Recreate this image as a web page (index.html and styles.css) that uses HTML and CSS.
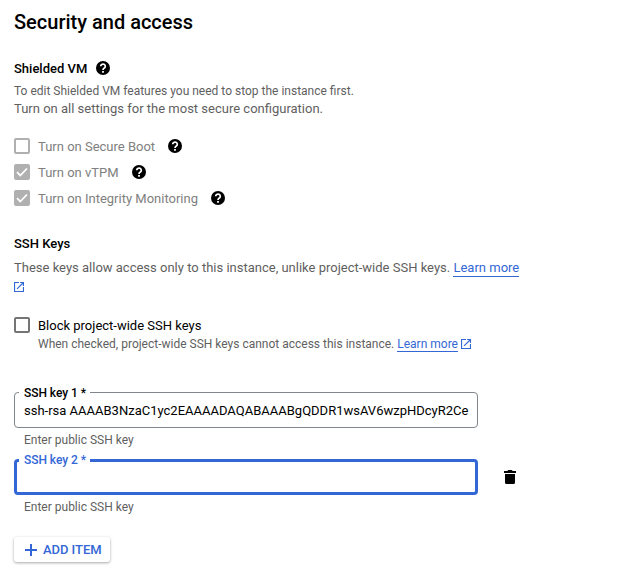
FILE: index.html
```html
<!DOCTYPE html>
<html lang="en">
<head>
<meta charset="utf-8">
<title>Security and access</title>
<link rel="stylesheet" href="styles.css">
</head>
<body>
<svg class="defs" aria-hidden="true">
  <symbol id="help" viewBox="0 0 14 14"><circle cx="7" cy="7" r="7"/><path d="M4.700 5.300a2.300 2.200 0 1 1 3.700 1.700C7.500 7.600 7 7.900 7 8.900" fill="none" stroke="#fff" stroke-width="1.700"/><path d="M6.100 10h1.800v1.700H6.100z" fill="#fff"/></symbol>
  <symbol id="launch" viewBox="3 3 18 18"><path d="M19 19H5V5h7V3H3v18h18v-9h-2v7zM14 3v2h3.590l-9.830 9.830 1.410 1.410L19 6.410V10h2V3h-7z"/></symbol>
</svg>
<main class="panel">
  <h2 class="title">Security and access</h2>

  <section class="shielded">
    <h3 class="subtitle"><span>Shielded VM</span><svg class="help"><use href="#help"/></svg></h3>
    <p class="note">To edit Shielded VM features you need to stop the instance first.</p>
    <p class="text">Turn on all settings for the most secure configuration.</p>
    <div class="options">
      <div class="option"><span class="box"></span><span class="option-label">Turn on Secure Boot</span><svg class="help"><use href="#help"/></svg></div>
      <div class="option"><span class="box checked"><svg viewBox="0 0 16 16"><path d="M3 8.200l3.300 3.300L13 4.500"/></svg></span><span class="option-label">Turn on vTPM</span><svg class="help"><use href="#help"/></svg></div>
      <div class="option"><span class="box checked"><svg viewBox="0 0 16 16"><path d="M3 8.200l3.300 3.300L13 4.500"/></svg></span><span class="option-label">Turn on Integrity Monitoring</span><svg class="help"><use href="#help"/></svg></div>
    </div>
  </section>

  <section class="ssh">
    <h3 class="subtitle">SSH Keys</h3>
    <p class="text keys-text">These keys allow access only to this instance, unlike project-wide SSH keys. <a class="link">Learn more</a> <svg class="launch"><use href="#launch"/></svg></p>
    <div class="block">
      <span class="box enabled"></span>
      <div>
        <div class="block-label">Block project-wide SSH keys</div>
        <div class="note block-note">When checked, project-wide SSH keys cannot access this instance. <a class="link">Learn more</a><svg class="launch"><use href="#launch"/></svg></div>
      </div>
    </div>
  </section>

  <div class="key-row">
    <div class="field">
      <fieldset class="outline idle"><legend>SSH key 1 *</legend><div class="value">ssh-rsa AAAAB3NzaC1yc2EAAAADAQABAAABgQDDR1wsAV6wzpHDcyR2Ce</div></fieldset>
      <div class="note hint">Enter public SSH key</div>
    </div>
  </div>
  <div class="key-row">
    <div class="field">
      <fieldset class="outline focused"><legend>SSH key 2 *</legend><div class="value"></div></fieldset>
      <div class="note hint">Enter public SSH key</div>
    </div>
    <svg class="trash" viewBox="0 0 12 14"><path d="M0 1h3.300L4.200 0h3.600l.9 1H12v2H0zM1 4h10v8.500a1.500 1.500 0 0 1-1.500 1.500h-7A1.500 1.500 0 0 1 1 12.500z"/></svg>
  </div>

  <button class="add"><svg viewBox="0 0 12 12"><path d="M5 0h2v5h5v2H7v5H5V7H0V5h5z"/></svg><span>ADD ITEM</span></button>
</main>
</body>
</html>
```
FILE: styles.css
```css
* { box-sizing: border-box; }
body { margin: 0; background: #fff; color: #000; font: 13px/20px Roboto, sans-serif; }
h2, h3, p { margin: 0; }
svg { display: block; flex: none; }
.defs { display: none; }
.panel { padding: 10px 14px 0; width: 540px; min-height: 583px; }
.title { font-size: 20px; font-weight: 500; line-height: 24px; }
.subtitle { display: flex; align-items: center; height: 20px; font-size: 13px; font-weight: 500; }
.subtitle span { padding-top: 2px; }
.shielded { padding-top: 24px; }
.help { width: 14px; height: 14px; margin-left: 9px; }
.note { font-size: 12px; line-height: 18px; color: #5f5f5f; }
.shielded .note { padding-top: 4px; }
.text { line-height: 18px; color: #5f5f5f; }
.options { padding-top: 15px; }
.option { display: flex; align-items: center; height: 26px; color: #808080; }
.option-label { padding-top: 2px; }
.option .help { margin-left: 13px; color: #000; }
.box { flex: none; width: 16px; height: 16px; margin-right: 8px; border: 2px solid #b0b0b0; border-radius: 2px; }
.box.checked { border: 0; background: #b0b0b0; }
.box.checked path { fill: none; stroke: #fff; stroke-width: 1.800; }
.box.enabled { border-color: #757575; margin-top: 2px; }
.ssh { padding-top: 23px; }
.keys-text { padding-top: 4px; line-height: 19px; }
.keys-text .link { padding-bottom: 1px; }
.link { color: #3367d6; border-bottom: 1px solid #3367d6; }
.launch { width: 10px; height: 10px; fill: #3367d6; }
.keys-text .launch { margin-top: 5px; }
.block { display: flex; padding-top: 23px; }
.block-label { height: 20px; line-height: 22px; }
.block-note { display: flex; white-space: pre; }
.block-note .link { height: 17px; }
.block-note .launch { margin: 4px 0 0 3px; }
.key-row { display: flex; height: 67px; }
.ssh + .key-row { margin-top: 33px; }
.field { width: 464px; }
.outline { height: 42px; margin: 0; padding: 0 0 0 4px; border: 1px solid #80868b; border-radius: 4px; }
.outline legend { width: 71px; height: 14px; padding: 0 5px; font-size: 12px; font-weight: 500; line-height: 14px; letter-spacing: -.04px; white-space: nowrap; }
.outline.idle legend { height: 13px; }
.value { padding-left: 5px; line-height: 22px; white-space: nowrap; }
.idle .value { padding-top: 1px; }
.focused { padding-left: 2px; border: 3px solid #3367d6; }
.focused legend { color: #3367d6; }
.hint { padding: 3px 0 0 10px; }
.trash { width: 12px; height: 14px; margin: 17px 0 0 26px; }
.add { display: flex; align-items: center; width: 96px; height: 25px; margin-top: 17px; padding: 0 0 0 11px; border: 0; border-radius: 3px; background: #fff; box-shadow: 0 1px 3px rgba(0,0,0,.35); color: #3367d6; font: 500 13px/25px Roboto, sans-serif; letter-spacing: -.05px; }
.add svg { width: 12px; height: 12px; margin-right: 6px; fill: #3367d6; }
```
